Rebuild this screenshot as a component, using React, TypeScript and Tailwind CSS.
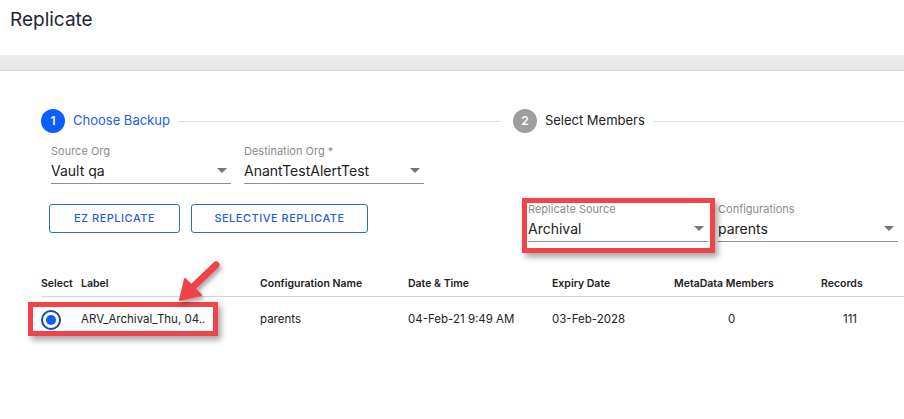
import React from "react";

function Caret() {
  return (
    <svg width="10" height="5" viewBox="0 0 10 5" className="shrink-0">
      <path d="M0 0 L10 0 L5 5 Z" fill="#757575" />
    </svg>
  );
}

function Select({ label, value, w }: { label: string; value: string; w: string }) {
  return (
    <div className={`${w} flex flex-col`}>
      <div className="h-[14px] text-[11px] leading-[14px] text-[#8c8c8c]">{label}</div>
      <div className="h-[26px] flex items-center justify-between border-b border-[#8f8f8f] pr-[4px]">
        <span className="text-[14px] text-[#222]">{value}</span>
        <Caret />
      </div>
    </div>
  );
}

export default function App() {
  return (
    <div
      className="relative w-[904px] h-[419px] bg-white overflow-hidden"
      style={{ fontFamily: "Inter, 'Noto Sans', sans-serif" }}
    >
      {/* Title */}
      <div className="h-[55px] pl-[10px] pt-[6px]">
        <h1 className="text-[19px] leading-[28px] text-[#1d2733] font-normal">Replicate</h1>
      </div>
      <div className="h-[16px] bg-gradient-to-b from-[#efefef] to-[#e6e6e6] border-b border-[#d6d6d6]" />

      {/* Stepper */}
      <div className="mt-[38px] pl-[41px] flex items-center h-[24px]">
        <div className="w-[24px] h-[24px] rounded-full bg-[#0b5fff] text-white text-[12px] font-semibold flex items-center justify-center">
          1
        </div>
        <span className="ml-[8px] text-[13px] text-[#2160f3]">Choose Backup</span>
        <div className="ml-[8px] w-[323px] h-px bg-[#dedede]" />
        <div className="ml-[12px] w-[24px] h-[24px] rounded-full bg-[#9e9e9e] text-white text-[12px] font-semibold flex items-center justify-center">
          2
        </div>
        <span className="ml-[8px] text-[13px] text-[#222]">Select Members</span>
        <div className="ml-[8px] flex-1 h-px bg-[#dedede]" />
      </div>

      {/* Org selects */}
      <div className="mt-[11px] pl-[51px] flex gap-[13px]">
        <Select label="Source Org" value="Vault qa" w="w-[180px]" />
        <Select label="Destination Org *" value="AnantTestAlertTest" w="w-[180px]" />
      </div>

      {/* Buttons + source selects */}
      <div className="mt-[18px] flex">
        <div className="pl-[49px] pt-[2px] flex gap-[11px]">
          <button className="w-[131px] h-[29px] border border-[#2c6ad6] rounded-[3px] text-[11px] tracking-[0.5px] text-[#1f5fd4] font-medium">
            EZ REPLICATE
          </button>
          <button className="w-[177px] h-[29px] border border-[#2c6ad6] rounded-[3px] text-[11px] tracking-[0.5px] text-[#1f5fd4] font-medium">
            SELECTIVE REPLICATE
          </button>
        </div>
        <div className="ml-[160px] flex gap-[10px]">
          <Select label="Replicate Source" value="Archival" w="w-[180px]" />
          <Select label="Configurations" value="parents" w="w-[180px]" />
        </div>
      </div>

      {/* Table */}
      <div className="mt-[29px] ml-[41px]">
        <div className="grid grid-cols-[40px_179px_148px_144px_122px_147px_1fr] h-[26px] items-center border-b border-[#d4d4dc] text-[10.5px] font-semibold text-[#222]">
          <div>Select</div>
          <div>Label</div>
          <div>Configuration Name</div>
          <div>Date &amp; Time</div>
          <div>Expiry Date</div>
          <div>MetaData Members</div>
          <div>Records</div>
        </div>
        <div className="grid grid-cols-[40px_179px_148px_144px_122px_147px_1fr] h-[46px] items-center text-[11.5px] text-[#222]">
          <div>
            <div className="w-[20px] h-[20px] rounded-full border-2 border-[#1047b8] flex items-center justify-center">
              <div className="w-[10px] h-[10px] rounded-full bg-[#0a5cff]" />
            </div>
          </div>
          <div>ARV_Archival_Thu, 04..</div>
          <div>parents</div>
          <div>04-Feb-21 9:49 AM</div>
          <div>03-Feb-2028</div>
          <div className="pl-[54px]">0</div>
          <div className="pl-[22px]">111</div>
        </div>
      </div>

      {/* Annotations */}
      <div className="absolute left-[522px] top-[198px] w-[193px] h-[55px] border-[5px] border-[#f0434a] shadow-[3px_4px_6px_rgba(0,0,0,0.35)] pointer-events-none" />
      <div className="absolute left-[28px] top-[302px] w-[190px] h-[34px] border-[5px] border-[#f0434a] shadow-[3px_4px_6px_rgba(0,0,0,0.35)] pointer-events-none" />
      <svg className="absolute left-0 top-0 pointer-events-none" width="904" height="419">
        <defs>
          <filter id="sh" x="-50%" y="-50%" width="200%" height="200%">
            <feDropShadow dx="2" dy="3" stdDeviation="2" floodColor="#000" floodOpacity="0.35" />
          </filter>
        </defs>
        <g filter="url(#sh)">
          <line x1="216" y1="265" x2="194" y2="286" stroke="#f0434a" strokeWidth="7" strokeLinecap="round" />
          <path d="M180 300 L185 279 L201 295 Z" fill="#f0434a" stroke="#f0434a" strokeWidth="2" strokeLinejoin="round" />
        </g>
      </svg>
    </div>
  );
}
